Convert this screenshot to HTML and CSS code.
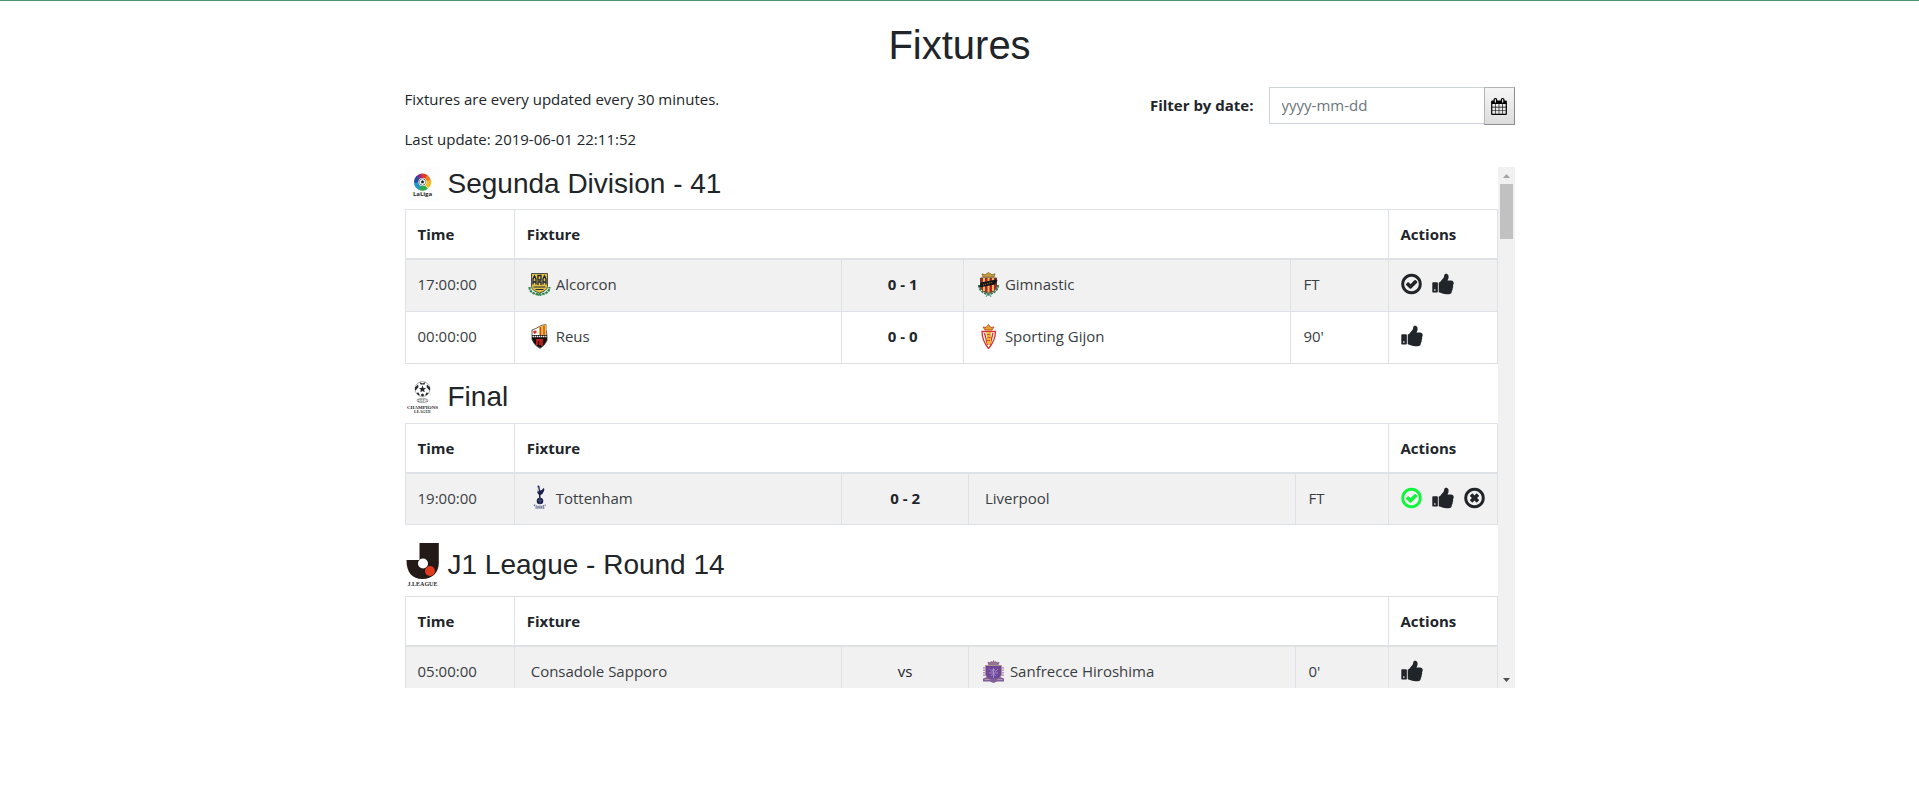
FILE: index.html
```html
<!DOCTYPE html>
<html lang="en">
<head>
<meta charset="utf-8">
<meta name="viewport" content="width=device-width, initial-scale=1">
<title>Fixtures</title>
<link rel="stylesheet" href="styles.css">
</head>
<body>
<svg class="sprite" aria-hidden="true">
  <symbol id="i-check" viewBox="128 0 1536 1792"><path d="M1299 813l-422 422q-24 24-57 24t-57-24l-250-250q-24-24-24-57t24-57l79-79q24-24 57-24t57 24l114 114 286-286q24-24 57-24t57 24l79 79q24 24 24 57t-24 57zm141 83q0-148-73-273t-198-198-273-73-273 73-198 198-73 273 73 273 198 198 273 73 273-73 198-198 73-273zm224 0q0 209-103 385.500t-279.500 279.500-385.500 103-385.500-103-279.500-279.500-103-385.500 103-385.500 279.500-279.500 385.500-103 385.500 103 279.500 279.500 103 385.500z"/></symbol>
  <symbol id="i-times" viewBox="128 0 1536 1792"><path d="M1225 1079l-146 146q-10 10-23 10t-23-10l-137-137-137 137q-10 10-23 10t-23-10l-146-146q-10-10-10-23t10-23l137-137-137-137q-10-10-10-23t10-23l146-146q10-10 23-10t23 10l137 137 137-137q10-10 23-10t23 10l146 146q10 10 10 23t-10 23l-137 137 137 137q10 10 10 23t-10 23zm215-183q0-148-73-273t-198-198-273-73-273 73-198 198-73 273 73 273 198 198 273 73 273-73 198-198 73-273zm224 0q0 209-103 385.500t-279.500 279.500-385.500 103-385.500-103-279.500-279.500-103-385.500 103-385.500 279.500-279.500 385.500-103 385.500 103 279.500 279.500 103 385.500z"/></symbol>
  <symbol id="i-thumb" viewBox="64 0 1600 1792"><path d="M320 1344q0-26-19-45t-45-19q-27 0-45.500 19t-18.500 45q0 27 18.500 45.500t45.500 18.500q26 0 45-18.500t19-45.500zm160-512v640q0 26-19 45t-45 19h-288q-26 0-45-19t-19-45v-640q0-26 19-45t45-19h288q26 0 45 19t19 45zm1184 0q0 86-55 149 15 44 15 76 3 76-43 137 17 56 0 117-15 57-54 94 9 112-49 181-64 76-197 78h-129q-66 0-144-15.500t-121.500-29-120.500-39.500q-123-43-158-44-26-1-45-19.500t-19-44.500v-641q0-25 18-43.500t43-20.500q24-2 76-59t101-121q68-87 101-120 18-18 31-48t17.500-48.500 13.500-60.500q7-39 12.500-61t19.500-52 34-50q19-19 45-19 46 0 82.500 10.500t60 26 40 40.500 24 45 12 50 5 45 .500 39q0 38-9.500 76t-19 60-27.500 56q-3 6-10 18t-11 22-8 24h277q78 0 135 57t57 135z"/></symbol>
</svg>

<main class="container">
  <h1>Fixtures</h1>
  <div class="intro">
    <div>
      <p>Fixtures are every updated every 30 minutes.</p>
      <p>Last update: 2019-06-01 22:11:52</p>
    </div>
    <form class="filter">
      <label for="date">Filter by date:</label>
      <div class="date-group">
        <input id="date" type="text" placeholder="yyyy-mm-dd">
        <button type="button" class="date-btn" aria-label="Open calendar">
          <svg viewBox="64 0 1664 1792"><path d="M192 1664h288v-288h-288v288zm352 0h320v-288h-320v288zm-352-352h288v-320h-288v320zm352 0h320v-320h-320v320zm-352-384h288v-288h-288v288zm736 736h320v-288h-320v288zm-384-736h320v-288h-320v288zm768 736h288v-288h-288v288zm-384-352h320v-320h-320v320zm-352-864v-288q0-13-9.500-22.500t-22.500-9.500h-64q-13 0-22.500 9.500t-9.500 22.500v288q0 13 9.500 22.500t22.500 9.500h64q13 0 22.500-9.500t9.500-22.500zm736 864h288v-320h-288v320zm-384-384h320v-288h-320v288zm384 0h288v-288h-288v288zm32-480v-288q0-13-9.500-22.500t-22.500-9.500h-64q-13 0-22.500 9.500t-9.500 22.500v288q0 13 9.500 22.500t22.500 9.500h64q13 0 22.500-9.500t9.500-22.500zm384-64v1280q0 52-38 90t-90 38h-1408q-52 0-90-38t-38-90v-1280q0-52 38-90t90-38h128v-96q0-66 47-113t113-47h64q66 0 113 47t47 113v96h384v-96q0-66 47-113t113-47h64q66 0 113 47t47 113v96h128q52 0 90 38t38 90z"/></svg>
        </button>
      </div>
    </form>
  </div>

  <div class="viewport">
    <div class="list">
      <section>
        <h2>
          <svg class="league" viewBox="0 0 35 34" height="34" aria-hidden="true">
            <rect width="35" height="34" fill="#fdfdfd"/>
            <g fill="none" stroke-width="4.500">
              <path d="M12.800 11A6.300 6.300 0 0 1 17 8.700" stroke="#8a2a86"/>
              <path d="M16.500 8.700A6.300 6.300 0 0 1 21.500 10.200" stroke="#e2382b"/>
              <path d="M21 9.800A6.300 6.300 0 0 1 23.800 14" stroke="#ee7b1d"/>
              <path d="M23.800 13.500A6.300 6.300 0 0 1 22 19.500" stroke="#f6b91c"/>
              <path d="M21.500 19.900A6.300 6.300 0 0 1 14.500 20.500" stroke="#2fa84a"/>
              <path d="M15 20.800A6.300 6.300 0 0 1 11.300 15" stroke="#2196c9"/>
              <path d="M11.300 15.500A6.300 6.300 0 0 1 13.300 10.500" stroke="#2b4ba0"/>
            </g>
            <circle cx="17.500" cy="15" r="4" fill="#fff"/>
            <circle cx="17.500" cy="15" r="3.300" fill="none" stroke="#222" stroke-width=".5"/>
            <path d="M16.200 14.400l1.300-1 1.300 1-.5 1.500h-1.600zM14.800 13l.9-.8M20.200 13l-.9-.8M16 17.600l.6-.9M19 17.600l-.6-.9" fill="#222" stroke="#222" stroke-width=".6"/>
            <text x="17.500" y="28.500" class="laliga">LaLiga</text>
          </svg>
          Segunda Division - 41
        </h2>
        <table>
          <colgroup><col class="c-time"><col class="c-team"><col><col class="c-team"><col class="c-status-wide"><col class="c-actions"></colgroup>
          <thead><tr><th scope="col">Time</th><th scope="col" colspan="4">Fixture</th><th scope="col">Actions</th></tr></thead>
          <tbody>
            <tr>
              <td>17:00:00</td>
              <td><div class="team">
                <svg viewBox="0 0 25 25" width="25" height="25" aria-hidden="true">
                  <path d="M2.500 15c0 5 4 7 10 7.500 6-.5 10-2.500 10-7.500" fill="none" stroke="#2e8a4d" stroke-width="2.200" stroke-dasharray="2.600 .7"/>
                  <path d="M12.500 21l-1.500 3M12.500 21l1.500 3" stroke="#2e8a4d"/>
                  <path d="M4.500 1.500h16v13q0 4-8 6.500-8-2.500-8-6.500z" fill="#e2c23c" stroke="#4a4f4a"/>
                  <path d="M6 12.500V7l1.500-3L9 7v5.500M6 10h3M16 12.500V7l1.500-3L19 7v5.500M16 10h3M11 8V3.500h3V8zM11 13v-3h3v3" fill="none" stroke="#1a2440" stroke-width="1.300"/>
                  <path d="M6.500 15h12M8.500 17.500h8" stroke="#1f2c52" stroke-width="1.200"/>
                </svg>
                <span>Alcorcon</span></div></td>
              <td class="score">0 - 1</td>
              <td><div class="team">
                <svg viewBox="0 0 25 25" width="25" height="25" aria-hidden="true">
                  <path d="M3 13c0 5 4 8 9.500 9.500C18 21 22 18 22 13" fill="none" stroke="#3c7b52" stroke-width="2.200" stroke-dasharray="2.500 .8"/>
                  <path d="M12.500 20l-2.500 5M12.500 20l2.500 5" stroke="#489b92"/>
                  <path d="M7 5L6 1.800l3 1 3.500-2.300L16 2.800l3-1L18 5z" fill="#c99d3b" stroke="#7e5c22" stroke-width=".7"/>
                  <path d="M4.500 6h16v8q0 5-8 7-8-2-8-7z" fill="#b5202c" stroke="#5c4321"/>
                  <path d="M8 6v13M12.500 6v14.500M17 6v13" stroke="#e4c05b" stroke-width="2"/>
                  <path d="M3 15.500l2-5L20 7.500l1.500 1-2.500 4z" fill="#141414"/>
                  <path d="M7 13l9-2.600" stroke="#d6b75a" stroke-width=".7" stroke-dasharray="1 1"/>
                </svg>
                <span>Gimnastic</span></div></td>
              <td>FT</td>
              <td><div class="actions">
                <button type="button" aria-label="Confirm"><svg class="ico"><use href="#i-check"/></svg></button>
                <button type="button" aria-label="Like"><svg class="ico-thumb"><use href="#i-thumb"/></svg></button>
              </div></td>
            </tr>
            <tr>
              <td>00:00:00</td>
              <td><div class="team">
                <svg viewBox="0 0 25 25" width="25" height="25" aria-hidden="true">
                  <path d="M5 6l4-1.500 5-3 5-1v5l1 6v5q-2 5-7 8-6-3-8-9z" fill="#fff" stroke="#4a3328" stroke-width=".8"/>
                  <path d="M12 3l7-2.500v10.500h-7z" fill="#f0c330"/>
                  <path d="M13.500 3v8M17 1.500V11" stroke="#d8432e" stroke-width="1.400"/>
                  <path d="M6 7l3.500-.5V9L7 10z" fill="#d9302c"/>
                  <path d="M5 11h15v5q-2 5-7 8-6-3-8-9z" fill="#15100f"/>
                  <path d="M5.500 12.500h14" stroke="#eee" stroke-width="1.700" stroke-dasharray="1.500 .6"/>
                  <path d="M10 15v6M10 16h5v6M13 17v4" fill="none" stroke="#c3201f" stroke-width="1.800"/>
                </svg>
                <span>Reus</span></div></td>
              <td class="score">0 - 0</td>
              <td><div class="team">
                <svg viewBox="0 0 25 25" width="25" height="25" aria-hidden="true">
                  <path d="M9 6L7 3l3 .5L12.500.500l2.500 3 3-.5-2 3z" fill="#e5a52a" stroke="#b33b22" stroke-width=".8"/>
                  <path d="M6 7.500h13.500q0 9-7 17-6.500-8-6.500-17z" fill="#fff" stroke="#d5332f" stroke-width="1.300"/>
                  <path d="M8.500 9l3 12M17 9l-3 12" stroke="#d5332f" stroke-width="1.300"/>
                  <path d="M10.500 8h4.500v11l-2 2.500-2-2.500z" fill="#efb72b"/>
                  <path d="M11 10.500h3M11.500 13.500h3M11 16.500h3" stroke="#d5532f"/>
                </svg>
                <span>Sporting Gijon</span></div></td>
              <td>90'</td>
              <td><div class="actions">
                <button type="button" aria-label="Like"><svg class="ico-thumb"><use href="#i-thumb"/></svg></button>
              </div></td>
            </tr>
          </tbody>
        </table>
      </section>

      <section>
        <h2>
          <svg class="league" viewBox="0 0 35 35" height="35" aria-hidden="true">
            <circle cx="17.500" cy="9" r="7.500" fill="#fff" stroke="#777" stroke-width=".6"/>
            <g fill="#26282b" transform="translate(0 .5)">
              <path d="M17.500 5l1 2.400 2.500.2-1.900 1.700.6 2.500-2.200-1.300-2.200 1.300.6-2.500L14 7.600l2.500-.2z"/>
              <path d="M14.500 1.500l3 1.500 3-1.500-1 2.500h-4zM10 7l3-3 .5 2.500L11.500 9 10 10zM25 7l-3-3-.5 2.500L23.500 9l1.500 1zM11.500 12.500l2-.5 1.500 3-2-.5zM23.500 12.500l-2-.5-1.500 3 2-.5zM16 14l1.500-1 1.500 1-.5 1.800h-2z"/>
            </g>
            <ellipse cx="17.500" cy="20.500" rx="5.500" ry="2.200" fill="none" stroke="#888" stroke-width=".7"/>
            <text x="17.500" y="22" class="uefa">UEFA</text>
            <text x="17.500" y="28.500" class="ucl">CHAMPIONS</text>
            <text x="17.500" y="33" class="ucl-sub">LEAGUE</text>
          </svg>
          Final
        </h2>
        <table>
          <colgroup><col class="c-time"><col class="c-team"><col><col class="c-team"><col class="c-status"><col class="c-actions"></colgroup>
          <thead><tr><th scope="col">Time</th><th scope="col" colspan="4">Fixture</th><th scope="col">Actions</th></tr></thead>
          <tbody>
            <tr>
              <td>19:00:00</td>
              <td><div class="team">
                <svg viewBox="0 0 25 25" width="25" height="25" aria-hidden="true">
                  <path d="M10.500 1q1.500-1 2 .5l.5 4q2 0 3.500-2.500 1.500.5.500 3-1 3-3.500 4v3h-1.500v-3q-2-1.500-2-4l1-2z" fill="#17204f"/>
                  <path d="M11 1.500l.8 4-1 2-.5-1.800z" fill="#f6f6f8"/>
                  <circle cx="13" cy="16" r="3.300" fill="#17204f"/>
                  <path d="M10.500 15q2.500 2 5 0M13 13v6" fill="none" stroke="#6a7095" stroke-width=".5"/>
                  <path d="M7 20l3 1.500h5.500L18.500 20M8.500 23h9" fill="none" stroke="#59608a" stroke-width="1.500" stroke-dasharray="1.200 .7"/>
                </svg>
                <span>Tottenham</span></div></td>
              <td class="score">0 - 2</td>
              <td><div class="team"><span>Liverpool</span></div></td>
              <td>FT</td>
              <td><div class="actions">
                <button type="button" class="on" aria-label="Confirmed"><svg class="ico"><use href="#i-check"/></svg></button>
                <button type="button" aria-label="Like"><svg class="ico-thumb"><use href="#i-thumb"/></svg></button>
                <button type="button" aria-label="Remove"><svg class="ico"><use href="#i-times"/></svg></button>
              </div></td>
            </tr>
          </tbody>
        </table>
      </section>

      <section>
        <h2>
          <svg class="league" viewBox="0 0 35 47" height="47" aria-hidden="true">
            <path d="M14.500 2h19.300V22c0 9-6 16-16.300 16S1.500 31.500 1.500 19h13z" fill="#231a18"/>
            <circle cx="18" cy="22.500" r="5" fill="#fff"/>
            <circle cx="25" cy="30" r="5" fill="#e03a1c"/>
            <text x="17.500" y="44.500" class="jleague">J.LEAGUE</text>
          </svg>
          J1 League - Round 14
        </h2>
        <table>
          <colgroup><col class="c-time"><col class="c-team"><col><col class="c-team"><col class="c-status"><col class="c-actions"></colgroup>
          <thead><tr><th scope="col">Time</th><th scope="col" colspan="4">Fixture</th><th scope="col">Actions</th></tr></thead>
          <tbody>
            <tr>
              <td>05:00:00</td>
              <td><div class="team"><span>Consadole Sapporo</span></div></td>
              <td class="score pending">vs</td>
              <td><div class="team">
                <svg viewBox="0 0 25 25" width="25" height="25" aria-hidden="true">
                  <path d="M7.500 5.500L7 3l2 1 1-1.500 1.500 1L12.500 1.500l1 2 1.500-1L16 4l2-1-.5 2.500z" fill="#9b7289" stroke="#6f4a86" stroke-width=".6"/>
                  <path d="M4.500 6.500h16V16q-1 4-8 6.500-7-2.500-8-6.500z" fill="#6d4799" stroke="#b08d85"/>
                  <path d="M3 8v10M22 8v10" stroke="#a084bd" stroke-width="1.600" stroke-dasharray="1.500 1"/>
                  <path d="M8 9.500l3 3 1.500-3 2 3 2.500-2.500M8 14h9M10 17l2.500-2 2.500 2M12.500 10v9" fill="none" stroke="#b9a3d5" stroke-width=".7"/>
                  <path d="M2 19.500l4-1.500 3 1.500h7l3-1.500 4 1.500v3h-7L12.500 24l-3.500-1.500H2z" fill="#81609a"/>
                  <path d="M3.500 20.500h5M16.500 20.500h5" stroke="#c1a3a8" stroke-width=".8"/>
                </svg>
                <span>Sanfrecce Hiroshima</span></div></td>
              <td>0'</td>
              <td><div class="actions">
                <button type="button" aria-label="Like"><svg class="ico-thumb"><use href="#i-thumb"/></svg></button>
              </div></td>
            </tr>
          </tbody>
        </table>
      </section>
    </div>
    <div class="scrollbar" aria-hidden="true">
      <svg viewBox="0 0 17 17" fill="#a3a3a3"><path d="M5 11l3.500-4 3.500 4z"/></svg>
      <div class="track"><div class="thumb"></div></div>
      <svg viewBox="0 0 17 17" fill="#505050"><path d="M5 7h7l-3.500 4z"/></svg>
    </div>
  </div>
</main>
</body>
</html>
```
FILE: styles.css
```css
* {
  box-sizing: border-box;
}

body {
  margin: 0;
  border-top: 1px solid #4f9573;
  background: #fff;
  color: #212529;
  font: 15px/24px "Open Sans", "Noto Sans", sans-serif;
}

.sprite {
  display: none;
}

.container {
  max-width: 1110px;
  margin: 0 auto;
  padding-top: 20px;
}

h1,
h2 {
  margin: 0;
  font-family: "Liberation Sans", Arial, sans-serif;
  font-weight: 400;
}

h1 {
  margin-bottom: 18px;
  font-size: 40px;
  line-height: 48px;
  text-align: center;
}

p {
  margin: 0 0 16px;
}

.intro {
  display: flex;
  justify-content: space-between;
  align-items: flex-start;
}

.filter {
  display: flex;
  align-items: flex-start;
  gap: 15px;
}

.filter label {
  padding-top: 6px;
  font-weight: 700;
}

.date-group {
  display: flex;
}

.date-group input {
  width: 215px;
  height: 37px;
  padding: 0 12px 2px;
  border: 1px solid #ced4da;
  border-right: 0;
  border-radius: 0;
  background: #fff;
  color: #495057;
  font: inherit;
}

.date-group input::placeholder {
  color: #6c757d;
  opacity: 1;
}

.date-btn {
  display: flex;
  align-items: center;
  justify-content: center;
  width: 31px;
  height: 38px;
  padding: 0;
  border: 1px solid #8c8c8c;
  border-left-color: #b5b5b5;
  border-top-color: #b5b5b5;
  background: linear-gradient(#f6f6f6, #dcdcdc);
}

.date-btn svg {
  width: 16px;
  height: 17px;
}

.viewport {
  display: flex;
  height: 521px;
}

.list {
  flex: 1;
  min-width: 0;
  overflow-y: auto;
  scrollbar-width: none;
}

.scrollbar {
  display: flex;
  flex-direction: column;
  width: 17px;
  background: #f1f1f1;
}

.scrollbar svg {
  width: 17px;
  height: 17px;
}

.track {
  flex: 1;
  padding: 0 2px;
}

.thumb {
  height: 55px;
  background: #c1c1c1;
}

h2 {
  display: flex;
  align-items: center;
  gap: 8px;
  margin-bottom: 8px;
  font-size: 28px;
  line-height: 34px;
}

.league {
  width: 35px;
}

.league text {
  text-anchor: middle;
  font-weight: 700;
  fill: #26282b;
}

.laliga {
  font-family: "Open Sans", sans-serif;
  font-size: 6px;
}

.league .uefa {
  font-family: "Liberation Serif", serif;
  font-size: 4px;
  font-weight: 400;
}

.ucl {
  font-family: "Liberation Serif", serif;
  font-size: 5px;
}

.ucl-sub {
  font-family: "Liberation Serif", serif;
  font-size: 4px;
}

.jleague {
  font-family: "Liberation Serif", serif;
  font-size: 6px;
}

table {
  width: 100%;
  margin-bottom: 16px;
  border: 1px solid #dee2e6;
  border-collapse: collapse;
  table-layout: fixed;
}

.c-time {
  width: 10%;
}

.c-actions {
  width: 109px;
}

.c-team {
  width: 30%;
}

.c-status {
  width: 92px;
}

.c-status-wide {
  width: 97px;
}

th,
td {
  padding: 12px;
  border: 1px solid #dee2e6;
  text-align: left;
}

th {
  border-bottom-width: 2px;
  font-weight: 700;
}

td {
  height: 52px;
  padding: 11px 12px 13px;
  color: #3a3e42;
}

tbody tr:nth-child(odd) {
  background: #f1f1f1;
}

td.score {
  color: #212529;
  font-weight: 700;
  text-align: center;
}

td.pending {
  font-weight: 400;
}

.team {
  display: flex;
  align-items: center;
}

.team span {
  margin-left: 4px;
}

.actions {
  display: flex;
  align-items: center;
  gap: 10px;
}

.actions button {
  display: flex;
  padding: 0;
  border: 0;
  background: none;
  color: #212529;
  cursor: pointer;
}

.actions .on {
  color: #12f53c;
}

.actions svg {
  height: 24px;
  fill: currentColor;
}

.ico {
  width: 21px;
}

.ico-thumb {
  width: 22px;
}
```
